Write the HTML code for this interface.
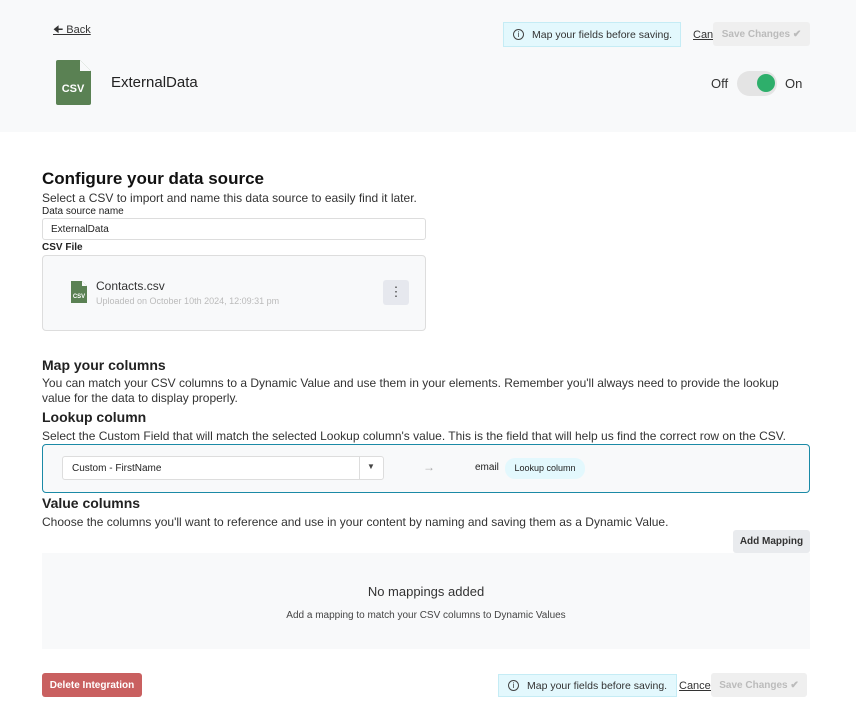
<!DOCTYPE html>
<html><head><style>
*{box-sizing:border-box;margin:0;padding:0}
body{width:856px;height:716px;background:#fff;font-family:"Liberation Sans",sans-serif;color:#222;position:relative;overflow:hidden}
.a{position:absolute}
.hdr{left:0;top:0;width:856px;height:132px;background:#f8f9fa}
.note{background:#e3f8fd;border:1px solid #c5ecf5;color:#333;font-size:10.5px;display:flex;align-items:center;padding-left:9px;height:25px;white-space:nowrap}
.note i{display:inline-block;width:11px;height:11px;border:1px solid #444;border-radius:50%;font-size:8px;text-align:center;line-height:9px;font-style:normal;margin-right:8px}
.save{background:#efefef;color:#bbb;font-size:10px;font-weight:bold;border-radius:3px;display:flex;align-items:center;justify-content:center;white-space:nowrap}
.lnk{font-size:11px;color:#333;text-decoration:underline}
.h2{font-size:17px;font-weight:bold;color:#111}
.h3{font-size:14px;font-weight:bold;color:#222}
.p{font-size:12px;color:#333}
</style></head><body>
<div class="a hdr"></div>
<div class="a lnk" style="left:53px;top:21px">🠈 Back</div>
<svg class="a" style="left:56px;top:60px" width="35" height="45" viewBox="0 0 35 45"><path d="M2 0H24L35 11V43a2 2 0 0 1-2 2H2a2 2 0 0 1-2-2V2a2 2 0 0 1 2-2z" fill="#5a8153"/><path d="M24 0V11H35z" fill="#f8f9fa"/><text x="17" y="32" font-size="11" font-weight="bold" fill="#fff" text-anchor="middle" font-family="Liberation Sans">CSV</text></svg>
<div class="a" style="left:111px;top:74px;font-size:15px;color:#222">ExternalData</div>
<div class="a note" style="left:503px;top:22px;width:178px"><i>i</i>Map your fields before saving.</div>
<div class="a lnk" style="left:693px;top:29px">Cancel</div>
<div class="a save" style="left:713px;top:22px;width:97px;height:24px">Save Changes ✔</div>
<div class="a" style="left:711px;top:76px;font-size:13px;color:#333">Off</div>
<div class="a" style="left:737px;top:71px;width:40px;height:25px;border-radius:13px;background:#e4e4e4"></div>
<div class="a" style="left:757px;top:74px;width:18px;height:18px;border-radius:50%;background:#2eaf6b"></div>
<div class="a" style="left:785px;top:76px;font-size:13px;color:#333">On</div>

<div class="a h2" style="left:42px;top:169px">Configure your data source</div>
<div class="a p" style="left:42px;top:191px">Select a CSV to import and name this data source to easily find it later.</div>
<div class="a" style="left:42px;top:206px;font-size:10px;color:#222">Data source name</div>
<div class="a" style="left:42px;top:218px;width:384px;height:22px;border:1px solid #ddd;border-radius:3px;font-size:10px;padding:5px 8px">ExternalData</div>
<div class="a" style="left:42px;top:242px;font-size:10px;font-weight:bold">CSV File</div>
<div class="a" style="left:42px;top:255px;width:384px;height:76px;border:1px solid #ddd;border-radius:4px;background:#f8f9fa"></div>
<svg class="a" style="left:71px;top:281px" width="16" height="22" viewBox="0 0 16 22"><path d="M0 0H11L16 5V22H0z" fill="#5a8153"/><path d="M11 0V5H16z" fill="#f8f9fa"/><text x="8" y="17" font-size="6" font-weight="bold" fill="#fff" text-anchor="middle" font-family="Liberation Sans">CSV</text></svg>
<div class="a" style="left:96px;top:279px;font-size:12px;color:#333">Contacts.csv</div>
<div class="a" style="left:96px;top:296px;font-size:9px;color:#bbb">Uploaded on October 10th 2024, 12:09:31 pm</div>
<div class="a" style="left:383px;top:280px;width:26px;height:25px;background:#e6e8ee;border-radius:3px;text-align:center;font-size:13px;line-height:24px;color:#444">⋮</div>

<div class="a h3" style="left:42px;top:357px">Map your columns</div>
<div class="a p" style="left:42px;top:376px;width:760px;line-height:15px">You can match your CSV columns to a Dynamic Value and use them in your elements. Remember you'll always need to provide the lookup value for the data to display properly.</div>
<div class="a h3" style="left:42px;top:409px">Lookup column</div>
<div class="a p" style="left:42px;top:429px">Select the Custom Field that will match the selected Lookup column's value. This is the field that will help us find the correct row on the CSV.</div>
<div class="a" style="left:42px;top:444px;width:768px;height:49px;border:1px solid #1b8aa6;border-radius:4px;background:#f8f9fa"></div>
<div class="a" style="left:62px;top:456px;width:322px;height:24px;border:1px solid #ddd;border-radius:3px;background:#fff;font-size:10px;padding:6px 9px">Custom - FirstName</div>
<div class="a" style="left:359px;top:457px;width:1px;height:22px;background:#ddd"></div>
<div class="a" style="left:367px;top:462px;font-size:8px;color:#444">▼</div>
<div class="a" style="left:423px;top:460px;font-size:12px;color:#aaa">→</div>
<div class="a" style="left:475px;top:462px;font-size:10px;color:#222">email</div>
<div class="a" style="left:505px;top:458px;width:80px;height:21px;border-radius:10px;background:#e3f8fd;font-size:9px;text-align:center;line-height:21px">Lookup column</div>
<div class="a h3" style="left:42px;top:495px">Value columns</div>
<div class="a p" style="left:42px;top:515px">Choose the columns you'll want to reference and use in your content by naming and saving them as a Dynamic Value.</div>
<div class="a save" style="left:733px;top:530px;width:77px;height:23px;color:#333;background:#e9ebee">Add Mapping</div>
<div class="a" style="left:42px;top:553px;width:768px;height:96px;background:#f8f9fa"></div>
<div class="a" style="left:42px;top:584px;width:768px;text-align:center;font-size:13px;color:#333">No mappings added</div>
<div class="a" style="left:42px;top:610px;width:768px;text-align:center;font-size:10px;color:#444">Add a mapping to match your CSV columns to Dynamic Values</div>

<div class="a save" style="left:42px;top:673px;width:100px;height:24px;background:#c96060;color:#fff">Delete Integration</div>
<div class="a note" style="left:498px;top:674px;width:179px;height:23px"><i>i</i>Map your fields before saving.</div>
<div class="a lnk" style="left:679px;top:680px">Cancel</div>
<div class="a save" style="left:711px;top:673px;width:96px;height:24px">Save Changes ✔</div>
</body></html>
